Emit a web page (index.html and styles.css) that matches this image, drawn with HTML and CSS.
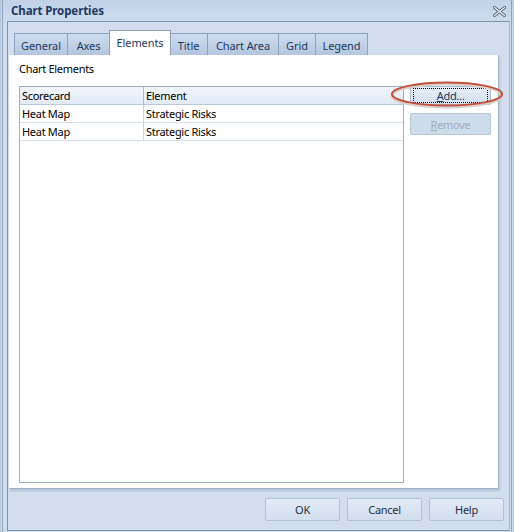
FILE: index.html
```html
<!DOCTYPE html>
<html>
<head>
<meta charset="utf-8">
<link rel="stylesheet" href="styles.css">
</head>
<body>
<div class="window">
  <div class="titlebar">
    <span class="title">Chart Properties</span>
    <svg class="close" width="13" height="11" viewBox="0 0 13 11">
      <path d="M1.5 1.5 L11.5 9.5 M11.5 1.5 L1.5 9.5" stroke="#5d6b7d" stroke-width="3" stroke-linecap="square"/>
      <path d="M1.5 1.5 L11.5 9.5 M11.5 1.5 L1.5 9.5" stroke="#f4f6fa" stroke-width="1.2" stroke-linecap="square"/>
    </svg>
  </div>
  <div class="frame">
    <div class="tabs">
      <div class="tab" style="width:54px">General</div>
      <div class="tab" style="width:42px">Axes</div>
      <div class="tab active" style="width:62px">Elements</div>
      <div class="tab" style="width:38px">Title</div>
      <div class="tab" style="width:71px">Chart Area</div>
      <div class="tab" style="width:37px">Grid</div>
      <div class="tab" style="width:52px">Legend</div>
    </div>
    <div class="panel">
      <div class="label">Chart Elements</div>
      <div class="content">
        <div class="grid">
          <div class="row head">
            <div class="c1">Scorecard</div>
            <div class="c2">Element</div>
          </div>
          <div class="row">
            <div class="c1">Heat Map</div>
            <div class="c2">Strategic Risks</div>
          </div>
          <div class="row">
            <div class="c1">Heat Map</div>
            <div class="c2">Strategic Risks</div>
          </div>
        </div>
        <div class="side">
          <div class="btn add"><span class="focus"><u>A</u>dd...</span></div>
          <div class="btn disabled"><u>R</u>emove</div>
          <svg class="ring" width="116" height="30" viewBox="0 0 116 30">
            <ellipse cx="58" cy="15.5" rx="55" ry="11.5" fill="none" stroke="#d9cfc8" stroke-width="3"/>
            <ellipse cx="58" cy="14" rx="55" ry="11.5" fill="none" stroke="#c4503f" stroke-width="2"/>
          </svg>
        </div>
      </div>
    </div>
    <div class="footer">
      <div class="btn big">OK</div>
      <div class="btn big">Cancel</div>
      <div class="btn big">Help</div>
    </div>
  </div>
</div>
</body>
</html>
```
FILE: styles.css
```css
* { box-sizing: border-box; }
html, body { margin: 0; padding: 0; }
body {
  width: 514px;
  height: 532px;
  overflow: hidden;
  font-family: "Noto Sans", "Open Sans", sans-serif;
  font-size: 11px;
  letter-spacing: -0.3px;
  color: #000;
}
.window {
  width: 514px;
  height: 532px;
  background: #d0ddee;
  border-left: 1px solid #b6c6db;
  border-right: 1px solid #b6c6db;
  padding: 0 3px 0 6px;
  position: relative;
}
.window::before {
  content: "";
  position: absolute;
  left: 1px; top: 0; bottom: 0;
  width: 1px;
  background: #8fa3bd;
}
.window::after {
  content: "";
  position: absolute;
  right: 1px; top: 0; bottom: 0;
  width: 1px;
  background: #8fa3bd;
}
.titlebar {
  height: 21px;
  margin: 0 -3px 0 -6px;
  padding: 0 7px 0 10px;
  background: linear-gradient(#c1d2e8, #cddbed);
  display: flex;
  align-items: center;
  justify-content: space-between;
}
.title {
  font-weight: bold;
  color: #1e3a5f;
  font-size: 11.5px;
  letter-spacing: -0.1px;
}
.close { margin-top: 1px; }
.frame {
  height: 510px;
  border: 1px solid #7e93af;
  border-right: 1px solid #a6b8cf;
  background: #d2deee;
  padding: 0 0 0 1px;
  display: flex;
  flex-direction: column;
}
.tabs {
  display: flex;
  align-items: flex-end;
  height: 33px;
  padding-left: 5px;
}
.tab {
  height: 22px;
  border: 1px solid #8aa1c0;
  border-bottom: none;
  border-left: none;
  background: linear-gradient(#cfdcee, #b3c6df);
  color: #1e3a5f;
  display: flex;
  align-items: center;
  justify-content: center;
  padding-top: 1px;
  letter-spacing: -0.1px;
}
.tab:first-child { border-left: 1px solid #8aa1c0; }
.tab.active {
  height: 25px;
  background: #fff;
  border: 1px solid #8aa1c0;
  border-bottom: none;
  margin-left: -1px;
  margin-right: -1px;
  position: relative;
  z-index: 1;
  padding-bottom: 2px;
}
.panel {
  width: 490px;
  height: 434px;
  background: #fff;
  border-right: 1px solid #a2b4cc;
  border-bottom: 1px solid #a2b4cc;
  box-shadow: 1px 2px 2px rgba(120, 140, 170, 0.35);
  padding: 6px 0 0 10px;
}
.label {
  height: 18px;
  line-height: 15px;
}
.content {
  display: flex;
  margin-top: 7px;
}
.grid {
  width: 385px;
  height: 397px;
  border: 1px solid #9db0cb;
}
.row {
  display: flex;
  height: 18px;
  border-bottom: 1px solid #d6e1ef;
}
.row.head {
  background: linear-gradient(#f2f6fb, #e2eaf5);
  border-bottom: 1px solid #b8c8dd;
}
.c1, .c2 {
  display: flex;
  align-items: center;
  padding-left: 2px;
  white-space: nowrap;
}
.c1 { width: 124px; border-right: 1px solid #c7d4e5; }
.c2 { flex: 1; }
.head .c1 { border-right-color: #a8bbd3; }
.side {
  position: relative;
  padding-left: 6px;
  display: flex;
  flex-direction: column;
  gap: 8px;
}
.btn {
  width: 81px;
  height: 19px;
  border: 1px solid #a9bbd1;
  border-radius: 2px;
  background: linear-gradient(#e6eef8, #d2dfef);
  display: flex;
  align-items: center;
  justify-content: center;
  color: #1b2a40;
}
.focus {
  width: 75px;
  height: 15px;
  border: 1px dotted #000;
  display: flex;
  align-items: center;
  justify-content: center;
  color: #1e3a5f;
}
.btn.disabled {
  height: 22px;
  color: #9eacbf;
  background: #cfdcec;
  border-color: #b8c8dc;
}
.ring {
  position: absolute;
  left: -15px;
  top: -6px;
}
.footer {
  display: flex;
  justify-content: flex-end;
  gap: 7px;
  padding: 9px 5px 0 0;
}
.btn.big {
  width: 75px;
  height: 23px;
  color: #1e2f48;
  border-color: #b3c3d7;
  background: linear-gradient(#e2eaf5, #d3dfef);
}
```
